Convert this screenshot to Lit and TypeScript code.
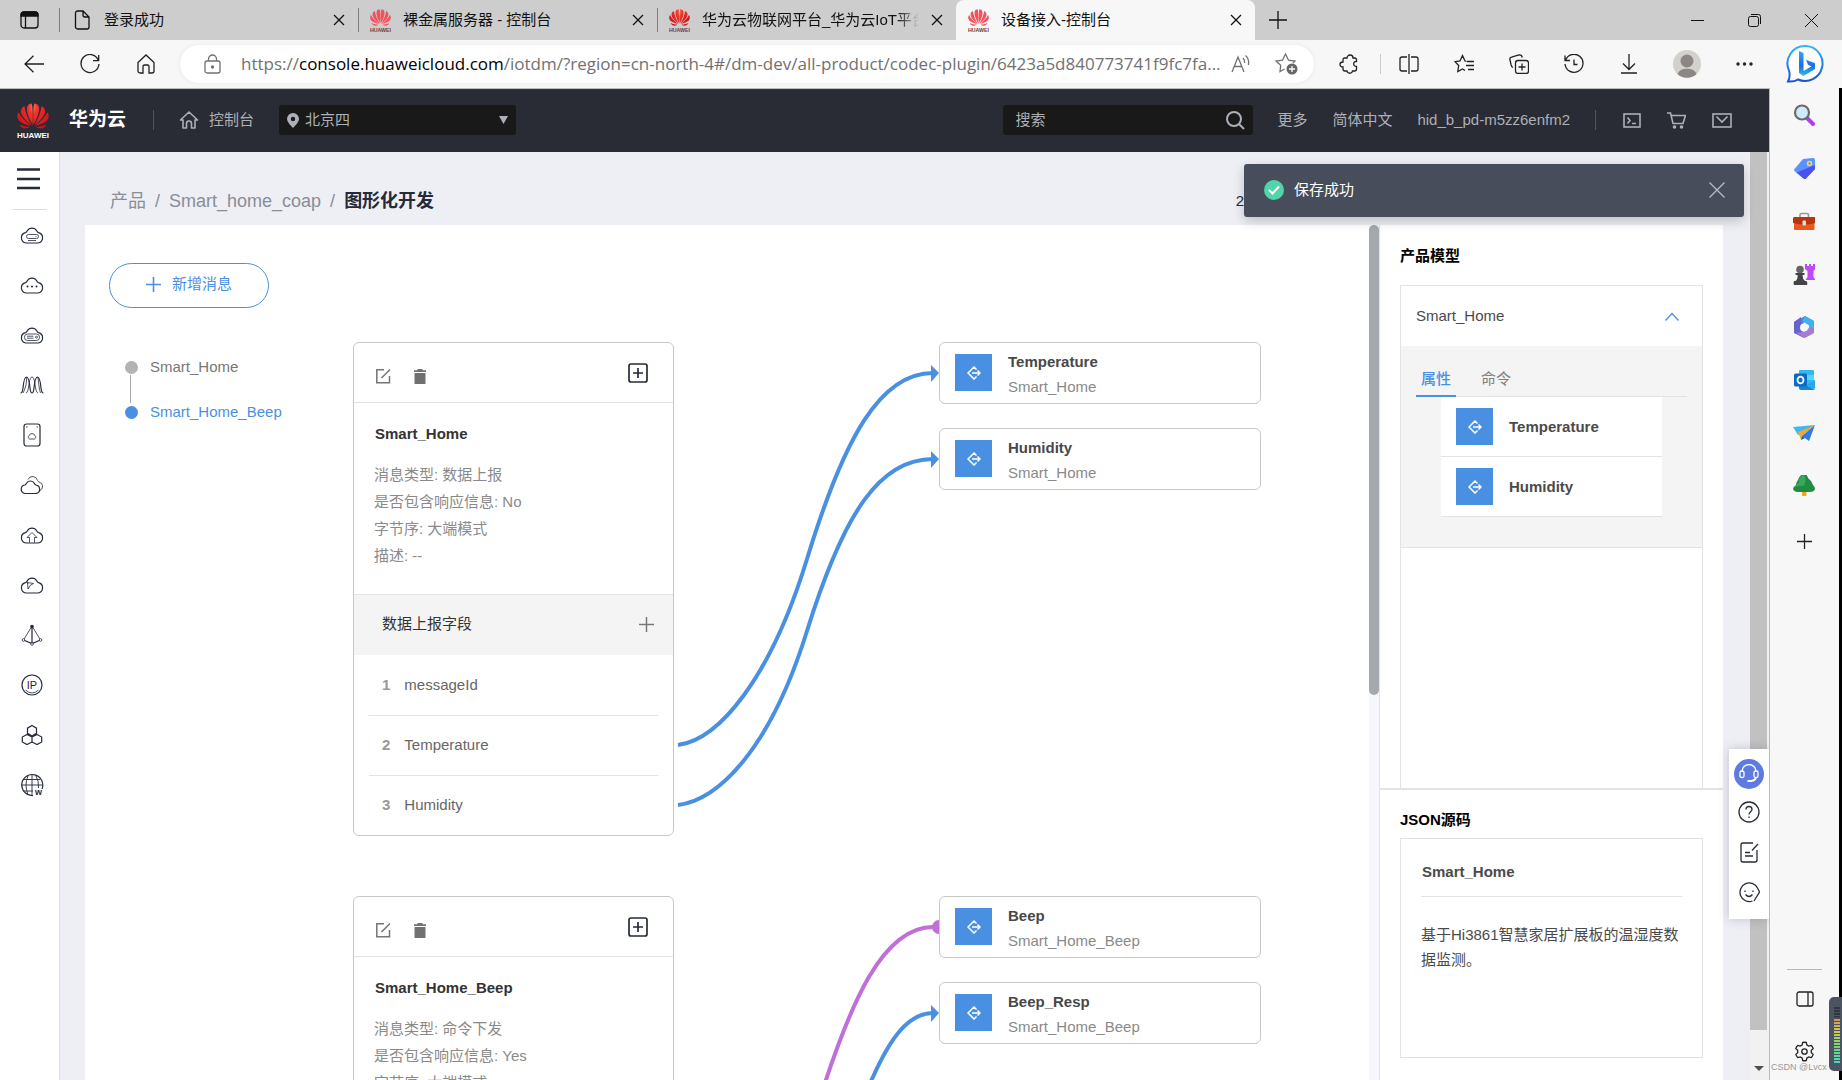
import { LitElement, html, svg, css } from "lit";
import { customElement, property } from "lit/decorators.js";
import { classMap } from "lit/directives/class-map.js";

const base = css`
  * { box-sizing: border-box; }
  button { border: 0; padding: 0; margin: 0; background: none; font: inherit; color: inherit; cursor: pointer; display: flex; align-items: center; justify-content: center; }
  a { color: inherit; text-decoration: none; }
  svg { display: block; flex: none; fill: none; stroke: currentColor; }
  ul, ol { list-style: none; margin: 0; padding: 0; }
  h1, h2, h3, p { margin: 0; font-size: inherit; }
`;

const icon = (body: unknown, w = 20, h = 20, box = `0 0 ${w} ${h}`, sw = 1.3) =>
  html`<svg width=${w} height=${h} viewBox=${box} stroke-width=${sw} aria-hidden="true">${body}</svg>`;

const petals = svg`
  <path d="M15.6 22C11 14 9.3 8 10 4C10.6 1.4 13 .5 14.7 .4C15.8 4 16 14 15.6 22Z"/>
  <path d="M14.7 22.4C8 17 3.3 12 3.9 7.5C4.3 5 6 3.8 7.5 3.2C8 9 11 16 14.7 22.4Z"/>
  <path d="M13.9 22.7C7 21.5 1.3 18.6 .5 15C0 12.5 .5 10.5 1.6 9.2C4 14.5 9 19 13.9 22.7Z"/>
  <path d="M13.2 23.8C9 26.3 4.8 26.2 2.4 21.4C6 23 10 23.6 13.2 23.8Z"/>`;

const huawei = (w: number, h: number, fill: string, text: string) => html`
  <svg width=${w} height=${h} viewBox="0 0 32 35" stroke="none" aria-hidden="true" style="stroke:none">
    <defs><radialGradient id="hw" cx="20" cy="4" r="24" gradientUnits="userSpaceOnUse">
      <stop offset="0" stop-color="#ffb08a"/><stop offset=".35" stop-color="#f0352c"/><stop offset="1" stop-color="#cf1017"/>
    </radialGradient></defs>
    <g fill=${fill}>${petals}<g transform="translate(32) scale(-1 1)">${petals}</g></g>
    <text x="16" y="34.5" text-anchor="middle" font-family="Liberation Sans, sans-serif" font-weight="700" font-size="8" fill=${text}>HUAWEI</text>
  </svg>`;

const closeIcon = svg`<path d="M1 1L11 11M11 1L1 11"/>`;
const cloud = svg`<path d="M6 18A5.3 5.3 0 0 1 5.5 7.6Q6.6 7.3 7.3 5.8A5.4 5.4 0 0 1 16.7 5.8Q17.4 7.3 18.5 7.6A5.3 5.3 0 0 1 18 18Z"/>`;

@customElement("browser-tabs")
class BrowserTabs extends LitElement {
  static styles = [base, css`
    :host { display: flex; height: 40px; background: #cdcdcd; font-size: 15px; color: #111; padding-right: 18px; align-items: stretch; overflow: hidden; }
    .workspace { width: 59px; }
    .tab { display: flex; align-items: center; flex: 0 1 299px; min-width: 0; padding: 0 13px 0 11px; border-left: 1px solid transparent; position: relative; }
    .tab::before { content: ""; position: absolute; left: -1px; top: 8px; height: 24px; width: 1px; background: #7d7d7d; }
    .tab.active { background: #f7f7f7; border-radius: 8px 8px 0 0; }
    .tab.active::before { display: none; }
    .title { flex: 1; min-width: 0; justify-content: flex-start; gap: 12px; text-align: left; }
    .label { flex: 1; white-space: nowrap; overflow: hidden; }
    .fade .label { -webkit-mask-image: linear-gradient(90deg, #000 90%, transparent); mask-image: linear-gradient(90deg, #000 90%, transparent); margin-right: 12px; }
    .add { width: 46px; }
    .space { flex: 1; }
    .win { width: 57px; }
    .win:last-child { width: 56px; margin-right: -15px; }
  `];
  render() {
    const doc = icon(svg`<path d="M1.5 3A2 2 0 0 1 3.5 1H9L15 7V17A2 2 0 0 1 13 19H3.5A2 2 0 0 1 1.5 17ZM9 1V5A2 2 0 0 0 11 7H15"/>`, 21, 20, "-3 0 21 20");
    const tabs = [
      { label: "登录成功", icon: doc },
      { label: "裸金属服务器 - 控制台", icon: huawei(21, 23, "#f4515f", "#6e3a40") },
      { label: "华为云物联网平台_华为云IoT平台", icon: huawei(21, 23, "url(#hw)", "#6e3a40"), fade: true },
      { label: "设备接入-控制台", icon: huawei(21, 23, "#f4515f", "#6e3a40"), active: true },
    ];
    return html`
      <button class="workspace" aria-label="工作区">${icon(svg`<rect x="1" y="1" width="17" height="16" rx="3"/><path d="M1 5V4A3 3 0 0 1 4 1H15A3 3 0 0 1 18 4V5Z" fill="#111"/><path d="M5.5 5V17"/>`, 19, 18)}</button>
      ${tabs.map(t => html`<div class=${classMap({ tab: true, active: !!t.active, fade: !!t.fade })}>
        <button class="title">${t.icon}<span class="label">${t.label}</span></button>
        <button aria-label="关闭标签页">${icon(closeIcon, 12, 12)}</button>
      </div>`)}
      <button class="add" aria-label="新建标签页">${icon(svg`<path d="M9 0V18M0 9H18"/>`, 18, 18)}</button>
      <span class="space"></span>
      <button class="win" aria-label="最小化">${icon(svg`<path d="M0 6.5H13"/>`, 13, 13, "0 0 13 13", 1)}</button>
      <button class="win" aria-label="还原">${icon(svg`<rect x=".5" y="2.5" width="10" height="10" rx="2"/><path d="M3 .5H10.5A2 2 0 0 1 12.500 2.500V10"/>`, 13, 13, "0 0 13 13", 1)}</button>
      <button class="win" aria-label="关闭">${icon(svg`<path d="M0 0L13 13M13 0L0 13"/>`, 13, 13, "0 0 13 13", 1)}</button>`;
  }
}

@customElement("browser-toolbar")
class BrowserToolbar extends LitElement {
  static styles = [base, css`
    :host { display: flex; height: 48px; align-items: center; background: #f7f7f7; color: #222; padding: 0 16px 0 6px; }
    .nav { width: 56px; height: 40px; }
    .address { flex: 1; min-width: 0; height: 38px; margin-left: 6px; border-radius: 19px; background: #fff; box-shadow: 0 0 4px #e6e6e6; display: flex; align-items: center; padding: 0 16px 0 24px; color: #717171; }
    .url { flex: 1; min-width: 0; margin-left: 20px; font: 17px/24px "Open Sans", "Noto Sans", sans-serif; white-space: nowrap; overflow: hidden; }
    .host { color: #000; }
    .read { width: 24px; }
    .read + .read { margin-left: 21px; }
    .tool { width: 55px; height: 40px; }
    .puzzle { width: 66px; padding-left: 4px; }
    .rule { width: 1px; height: 20px; background: #ccc; }
    .tool.me { width: 61px; }
    .more { margin-right: 14px; }
  `];
  render() {
    const tools: [string, unknown][] = [
      ["分屏", icon(svg`<path d="M8 3H3A2 2 0 0 0 1 5V15A2 2 0 0 0 3 17H8M12 3H17A2 2 0 0 1 19 5V15A2 2 0 0 1 17 17H12M10 0V20"/>`)],
      ["收藏夹", icon(svg`<path d="M12.500 7.500L11 7L8.500 1.500L6 7L1 7.700L4.700 11.500L3.800 17.500L8.500 15L11 16.500M13 7.500H20M12 11.500H20M14 15.500H20"/>`)],
      ["集锦", icon(svg`<rect x="6.500" y="6.500" width="13" height="13" rx="2.500"/><path d="M13 9.500V16.500M9.500 13H16.500M4 13.500C2.500 13 2.500 12 2 10.500L1 6C.6 4.500 1 3.500 2.500 3.200L10 1C12 .6 12.800 1.200 13.300 3.500"/>`)],
      ["历史记录", icon(svg`<path d="M1 1.500V6.500H6M1.500 6.300A9 9 0 1 1 1 10M10 5.500V10.500H13.500"/>`)],
      ["下载", icon(svg`<path d="M8 0V15M2 9.500L8 15.500L14 9.500M0 19H16"/>`, 16, 20)],
    ];
    return html`
      <button class="nav" aria-label="后退">${icon(svg`<path d="M20 9H1M9.500 .8L1 9L9.500 17.200"/>`, 20, 18)}</button>
      <button class="nav" aria-label="刷新">${icon(svg`<path d="M18.500 6.500A9 9 0 1 0 19 10M18.700 1V6.700H13"/>`)}</button>
      <button class="nav" aria-label="主页">${icon(svg`<path d="M1 8.500L9 1L17 8.500V17A2 2 0 0 1 15 19H12V12.500A1.500 1.500 0 0 0 10.500 11H7.500A1.500 1.500 0 0 0 6 12.500V19H3A2 2 0 0 1 1 17Z"/>`, 18, 20)}</button>
      <div class="address">
        ${icon(svg`<rect x="1" y="7" width="15" height="12" rx="2"/><path d="M4.500 7V5A4 4 0 0 1 12.500 5V7"/><circle cx="8.500" cy="13" r="1" fill="#666"/>`, 17, 20)}
        <span class="url">https://<span class="host">console.huaweicloud.com</span>/iotdm/?region=cn-north-4#/dm-dev/all-product/codec-plugin/6423a5d840773741f9fc7fa...</span>
        <button class="read" aria-label="大声朗读">${icon(svg`<path d="M1 18L7 3L13 18M3.200 12.500H10.800M12 4Q14 6 13.500 9M14.500 1.500Q18.500 5 17.500 11"/>`, 20, 20)}</button>
        <button class="read" aria-label="收藏此页">${icon(svg`<path d="M9.500 16L5 18.500L5.700 12.300L1 8L7.500 7.200L10.500 1L13.500 7.200L20 8L18 10"/><circle cx="17" cy="16" r="5.500" fill="#666" stroke="none"/><path d="M17 13V19M14 16H20" stroke="#fff"/>`, 23, 22)}</button>
      </div>
      <button class="tool puzzle" aria-label="扩展">${icon(svg`<path d="M5 4H8A3 3 0 0 1 14 4H15.500A2 2 0 0 1 17.500 6V7.500C14 7 13.500 12.500 17.500 12.500V15A2 2 0 0 1 15.500 17H13.500C13 20 8.500 20 8 17H6A2 2 0 0 1 4 15V13C0 13 0 8 4 8V6A2 2 0 0 1 5 4Z"/>`)}</button>
      <span class="rule"></span>
      ${tools.map(([n, i]) => html`<button class="tool" aria-label=${n}>${i}</button>`)}
      <button class="tool me" aria-label="个人资料">${icon(svg`<g stroke="none"><circle cx="14" cy="14" r="14" fill="#d4d1cd"/><circle cx="14" cy="11" r="6.500" fill="#8b8784"/><path d="M4.500 24A9.800 7 0 0 1 23.500 24A14 14 0 0 1 4.500 24Z" fill="#8b8784"/></g>`, 28, 28)}</button>
      <button class="tool more" aria-label="设置及其他">${icon(svg`<g fill="#222" stroke="none"><circle cx="2" cy="2" r="1.700"/><circle cx="8.500" cy="2" r="1.700"/><circle cx="15" cy="2" r="1.700"/></g>`, 17, 4)}</button>
      <button aria-label="必应">${icon(svg`<defs><linearGradient id="bo" x1="0" y1="0" x2="0" y2="1"><stop offset="0" stop-color="#2fb8f5"/><stop offset="1" stop-color="#1c50d0"/></linearGradient><linearGradient id="bb" x1="0" y1="0" x2="0" y2="1"><stop offset="0" stop-color="#35a6f2"/><stop offset=".6" stop-color="#1b6ee0"/><stop offset="1" stop-color="#2bc4ea"/></linearGradient></defs>
        <path d="M20 2A17.500 17.500 0 1 1 12 35.500Q8 38 2 37.500Q4.500 33 3.200 27A17.500 17.500 0 0 1 20 2Z" fill="#fff" stroke="url(#bo)" stroke-width="2"/>
        <path d="M13 7L17.500 9V27L25.500 22.500L22 20.800L20 15.800L29 19.300V25L17.500 32L13 29Z" fill="url(#bb)" stroke="none"/>`, 40, 40)}</button>`;
  }
}

@customElement("edge-sidebar")
class EdgeSidebar extends LitElement {
  static styles = [base, css`
    :host { display: flex; flex-direction: column; align-items: center; width: 73px; background: #f7f7f7; border-left: 1px solid #bbb; border-right: 3px solid #000; color: #222; position: relative; }
    .app { height: 53px; width: 53px; padding-right: 2px; }
    .app svg { stroke: none; }
    .plus { height: 58px; padding-right: 1px; }
    .space { flex: 1; }
    .rule { width: 35px; height: 1px; background: #b8b8b8; }
    .tool { height: 57px; width: 54px; }
    .tool.gear { height: 49px; margin-bottom: 4px; }
    .meter { position: absolute; right: -3px; bottom: 9px; width: 13px; height: 74px; border-radius: 5px 0 0 5px; background: #4d5461; padding: 9px 2px 8px 5px; }
    .bars { display: block; height: 100%; background: repeating-linear-gradient(#4d5461 0 1px, transparent 1px 3px), linear-gradient(#31353e 20%, #c8935a 21%, #cfc75a 45%, #7fcf7c 70%, #46d6c0); }
    .mark { position: absolute; left: 1px; bottom: 6px; font: 9px/14px "Liberation Sans", sans-serif; color: #999; white-space: nowrap; }
  `];
  render() {
    const apps: [string, unknown][] = [
      ["搜索", svg`<path d="M14 14L20 20" stroke="#b53bf0" stroke-width="4" stroke-linecap="round"/><circle cx="9" cy="8.500" r="7" fill="#cfeafc" stroke="#6b6b6b" stroke-width="2.200"/>`],
      ["购物", svg`<path d="M10 2L20 1Q22 1 22 3V12L13 21.500Q12 22.500 10.500 21.500L1.500 14Q.5 13 1.500 12Z" fill="#5b92ff"/><path d="M3.500 15.500L22 8V12L13 21.500Q12 22.500 10.500 21.500Z" fill="#4a52f5"/><circle cx="16.500" cy="6.500" r="2" fill="#5b92ff" stroke="#ffd940" stroke-width="1.500"/>`],
      ["工具", svg`<path d="M7 8V5Q7 3.500 8.500 3.500H14Q15.500 3.500 15.500 5V8" stroke="#999" stroke-width="1.600" fill="none"/><rect x="1" y="13" width="20.500" height="7" rx="1" fill="#e65a22"/><path d="M1 7H21.500Q22.500 7 22.500 8.500V13Q11 16 0 13V8.500Q0 7 1 7Z" fill="#b8340d"/><rect x="9.500" y="10.500" width="3.500" height="5" rx="1" fill="#ddd"/>`],
      ["游戏", svg`<path d="M12 1H14V3H16V1H18V3H20V1H22.500V6L20.500 8V14L22.500 17H12.500L14.500 14V8L12 6Z" fill="#c04bf5"/><circle cx="7" cy="6.500" r="3.800" fill="#666"/><path d="M2.500 10H11.500V12H9.500Q9.500 16 12 18H13.500Q15 20 14 22H1Q0 20 1 18H2.500Q5 16 4.500 12H2.500Z" fill="#444"/>`],
      ["Microsoft 365", svg`<path d="M12 0L21 5V12L16 9L11 6L8 15L1 16V6Z" fill="#4d7ee8"/><path d="M12 0L21 5V13L16 16V9L9 5Z" fill="#3cb3ee"/><path d="M1 6L8 1V14L12 17L11 22L1 17Z" fill="#6763cc"/><path d="M21 12V17L12 22L3 17L10 16L16 12Z" fill="#a679d6"/><circle cx="11" cy="11.500" r="4" fill="#f7f7f7"/>`],
      ["Outlook", svg`<rect x="6" y="1" width="15" height="19" rx="1" fill="#35b8f1"/><path d="M13 6H21V11H13Z" fill="#50d9ff"/><path d="M6 12L22 21H8Q6 21 6 19Z" fill="#1784d9"/><path d="M22 11V20L14 15.500Z" fill="#28a8ea"/><rect x="1" y="4.500" width="13" height="13" rx="1.500" fill="#0a6cc4"/><ellipse cx="7.500" cy="11" rx="3" ry="3.400" stroke="#fff" stroke-width="1.800" fill="none"/>`],
      ["Drop", svg`<path d="M0 5L22 3L5 13Z" fill="#3cb9f3"/><path d="M5 10L22 3L9 14L8 18Z" fill="#f4a52a"/><path d="M9 14L22 3L16 19Z" fill="#2b79ea"/><path d="M8 18L9 14L12 16Z" fill="#1c57b8"/>`],
      ["E-tree", svg`<rect x="9" y="15" width="4.500" height="6" rx="1" fill="#f3a31c"/><path d="M11 -1Q14 -1 15 3L18 6Q19 8 20 10Q22 12 22 14Q21 17 17 17H5Q1 17 0 14Q0 12 3 10Q3 8 5 5Q7 -1 11 -1Z" fill="#1f8b43"/><path d="M11 0Q6 0 6 7Q2 11 1 14Q3 10 11 11Q14 5 11 0Z" fill="#3aa75c"/>`],
    ];
    return html`
      ${apps.map(([n, b]) => html`<button class="app" aria-label=${n}>${icon(b, 22, 22)}</button>`)}
      <button class="plus" aria-label="自定义">${icon(svg`<path d="M7.500 0V15M0 7.500H15"/>`, 15, 15)}</button>
      <span class="space"></span><span class="rule"></span>
      <button class="tool" aria-label="隐藏侧边栏">${icon(svg`<rect x="1" y="1" width="16" height="14" rx="2"/><path d="M12 1V15"/>`, 18, 16)}</button>
      <button class="tool gear" aria-label="设置">${icon(svg`<circle cx="10.500" cy="10.500" r="2.700"/><path d="M8.700 1.500Q10.500 1 12.300 1.500L12.900 4L14.800 5.100L17.300 4.400Q18.600 5.800 19.200 7.600L17.300 9.400V11.600L19.200 13.400Q18.600 15.200 17.300 16.600L14.800 15.900L12.900 17L12.300 19.500Q10.500 20 8.700 19.500L8.100 17L6.200 15.900L3.700 16.600Q2.400 15.200 1.800 13.400L3.700 11.600V9.400L1.800 7.600Q2.400 5.800 3.700 4.400L6.200 5.100L8.100 4Z"/>`, 21, 21)}</button>
      <span class="mark">CSDN @Lvcx</span>
      <span class="meter"><span class="bars"></span></span>`;
  }
}

@customElement("console-header")
class ConsoleHeader extends LitElement {
  static styles = [base, css`
    :host { display: flex; align-items: center; height: 63px; background: #292b35; color: #adb0b8; font-size: 15px; padding: 0 37px 2px 17px; border-top: 1px solid #33353f; }
    .brand { display: flex; align-items: center; gap: 20px; color: #fff; font-weight: 700; font-size: 19px; }
    .rule { width: 1px; height: 20px; background: #50525c; }
    .home { display: flex; align-items: center; gap: 10px; margin: 0 25px; }
    .brand + .rule { margin-left: 27px; }
    .region { width: 237px; height: 30px; background: #191919; border-radius: 3px; display: flex; align-items: center; padding: 0 8px; }
    select { flex: 1; appearance: none; border: 0; background: transparent; color: inherit; font: inherit; height: 30px; padding: 0 0 0 6px; }
    .search { width: 250px; height: 30px; background: #191919; border-radius: 3px; display: flex; align-items: center; padding: 0 8px 0 12px; margin-left: auto; }
    input { flex: 1; min-width: 0; border: 0; background: transparent; font: inherit; color: inherit; padding: 0; }
    input::placeholder { color: #adb0b8; }
    .links { display: flex; align-items: center; gap: 25px; margin-left: 24px; }
    .tools { display: flex; align-items: center; gap: 26px; margin-left: 2px; }
  `];
  render() {
    return html`
      <a class="brand" href="#">${huawei(32, 35, "url(#hw)", "#fff")}华为云</a>
      <span class="rule"></span>
      <a class="home" href="#">${icon(svg`<path d="M1.500 10L10 2L18.500 10H16V18H12.500V13.500A2.500 2.500 0 0 0 7.500 13.500V18H4V10Z" stroke-linejoin="round"/>`, 20, 20, "0 0 20 20", 1.6)}控制台</a>
      <label class="region">${icon(svg`<path d="M6 0A6 6 0 0 1 12 6Q12 9 6 15Q0 9 0 6A6 6 0 0 1 6 0ZM6 3.800A2.200 2.200 0 1 0 6 8.200A2.200 2.200 0 1 0 6 3.800Z" fill="#adb0b8" stroke="none"/>`, 12, 15)}
        <select aria-label="区域"><option>北京四</option></select>
        ${icon(svg`<path d="M0 0H9L4.500 8Z" fill="#adb0b8" stroke="none"/>`, 9, 8)}</label>
      <label class="search"><input placeholder="搜索" aria-label="搜索">${icon(svg`<circle cx="8" cy="8" r="7"/><path d="M13 13L18 18"/>`, 19, 19, "0 0 19 19", 2)}</label>
      <nav class="links"><a href="#">更多</a><a href="#">简体中文</a><a href="#">hid_b_pd-m5zz6enfm2</a><span class="rule"></span>
        <span class="tools">
          <a href="#" aria-label="CloudShell">${icon(svg`<rect x="1" y="1" width="16" height="13"/><path d="M4.500 4.500L7 7.500L4.500 10.500M9 10.500H13"/>`, 18, 15, "0 0 18 15", 1.6)}</a>
          <a href="#" aria-label="购物车">${icon(svg`<path d="M0 1H3.500L6 11.500H16L18.500 3.500H4.500"/><circle cx="7.500" cy="15" r="1" fill="#adb0b8"/><circle cx="14.500" cy="15" r="1" fill="#adb0b8"/>`, 19, 17, "0 0 19 17", 1.6)}</a>
          <a href="#" aria-label="消息">${icon(svg`<rect x="1" y="1" width="18" height="13"/><path d="M4.500 3.500L10 9L15.500 3.500"/>`, 20, 15, "0 0 20 15", 1.6)}</a>
        </span></nav>`;
  }
}

@customElement("service-nav")
class ServiceNav extends LitElement {
  static styles = [base, css`
    :host { display: flex; flex-direction: column; width: 60px; background: #fff; border-right: 1px solid #dcdde3; color: #252b3a; padding: 16px 0 0; overflow: hidden; }
    .menu { margin-left: 17px; align-self: flex-start; }
    .rule { height: 1px; margin: 19px 12px 0 13px; background: #dcdcdc; }
    .item { height: 50px; display: flex; align-items: center; padding-left: 20px; }
    text { font-family: "Liberation Sans", sans-serif; fill: #252b3a; stroke: none; }
  `];
  render() {
    const thin = (b: unknown) => svg`<g stroke-width=".8">${b}</g>`;
    const items: [string, unknown][] = [
      ["弹性云服务器", svg`${cloud}${thin(svg`<rect x="6.500" y="9.500" width="12" height="4" rx="2"/><path d="M8 15.500H16M15.500 11.500H16.500"/>`)}`],
      ["云容器引擎", svg`${cloud}<g fill="#252b3a" stroke="none"><circle cx="7.500" cy="11.500" r="1"/><circle cx="12" cy="11.500" r="1"/><circle cx="16.500" cy="11.500" r="1"/></g>`],
      ["裸金属服务器", svg`${cloud}${thin(svg`<rect x="4.500" y="9" width="15" height="6.500" rx="3"/><path d="M7 11.200H13.500M7 13.200H13.500"/><circle cx="16.500" cy="12.200" r="1"/>`)}`],
      ["弹性伸缩", svg`<path d="M.500 18Q2.500 18 3 13Q4 2 6.500 2Q9 2 10 13Q10.500 18 12 18Q13.500 18 14 13Q15 2 17.500 2Q20 2 21 13Q21.500 18 23.500 18"/><path stroke-width=".8" d="M3 18Q4 17 6 10Q7 2 6.500 2M6 18Q8 18 9 9Q10 2 12 2Q14 2 15 9Q16 18 18 18M20.500 18Q19 14 18 2"/>`],
      ["云硬盘", svg`<rect x="4" y="-1" width="16" height="22" rx="2.500"/>${thin(svg`<path d="M9.500 14H14.500A2 2 0 0 0 14.800 10.500A3 3 0 0 0 9.200 10.500A2 2 0 0 0 9.500 14ZM6 2H7.500M16.500 2H18"/>`)}`],
      ["专属主机", svg`<path d="M5 18.500A4.300 4.300 0 0 1 4.800 10Q5.700 9.700 6.300 8.500A4.600 4.600 0 0 1 14.500 8.500Q15 9.700 16 10A4.300 4.300 0 0 1 16 18.500Z"/>${thin(svg`<path d="M8 4.500A5 5 0 0 1 17.500 5.500Q18 6.500 19 7A4.500 4.500 0 0 1 20 15.500"/>`)}`],
      ["对象存储", svg`${cloud}${thin(svg`<path d="M12 7.500L17 12.500H14.500V17.500M12 7.500L7 12.500H9.500V17.500"/>`)}`],
      ["内容分发", svg`${cloud}${thin(svg`<path d="M7 6.500Q7.500 8 8 9M7.500 7.500L13.500 8.500L10 10.500L8 14Z"/>`)}`],
      ["虚拟私有云", svg`${thin(svg`<path d="M12 1L3.500 15M12 1L20.500 15"/>`)}<path d="M12 1V18.500M3.500 15L12 18.500L20.500 15"/><circle cx="12" cy="1.500" r="1.200" fill="#252b3a"/><g stroke-width=".8" fill="#fff"><circle cx="3.500" cy="15" r="1.300"/><circle cx="20.500" cy="15" r="1.300"/><circle cx="12" cy="19" r="1.300"/></g>`],
      ["弹性公网IP", svg`<circle cx="12" cy="10" r="10"/><path d="M5.500 15Q12 21 18.500 15" stroke-width=".8"/><text x="12" y="14" text-anchor="middle" font-size="11">IP</text>`],
      ["区块链", svg`<path d="M12 .5L16.500 3.200V8.300L12 11L7.500 8.300V3.200ZM7 9.500L12 12V17L7 19.500L2.300 17V12ZM17 9.500L21.700 12V17L17 19.500L12 17V12Z"/>`],
      ["WeLink", svg`<path d="M22 14A10.500 10.500 0 1 0 13 20.500"/><path stroke-width=".9" d="M12 0V20M1.500 10H22.500M4 4.500H20M4 16H13M8 1Q4 10 8 19.500M16 1Q19 6 18.500 13"/><text x="15" y="20" font-size="9" font-weight="700">w</text>`],
    ];
    return html`
      <button class="menu" aria-label="服务列表">${icon(svg`<path d="M0 1.500H23M0 11H23M0 20H23"/>`, 23, 22, "0 0 23 22", 2.4)}</button>
      <div class="rule"></div>
      ${items.map(([n, b]) => html`<a class="item" href="#" aria-label=${n}>${icon(b, 24, 24, "0 -2 24 24", 1.2)}</a>`)}`;
  }
}

const linkGlyph = html`<svg width="14" height="14" viewBox="0 0 14 14" stroke-width="1.5" aria-hidden="true"><path d="M9.500 3.500L7 1L1 7L7 13L9.500 10.500M5 7H13M10.500 4.500L13 7L10.500 9.500"/></svg>`;

@customElement("message-card")
class MessageCard extends LitElement {
  @property() name = "";
  @property({ attribute: false }) info: string[] = [];
  @property() section = "";
  @property({ attribute: false }) fields: string[] = [];
  static styles = [base, css`
    :host { display: block; width: 321px; border: 1px solid #c8c8c8; border-radius: 6px; background: #fff; color: #8a8a8a; overflow: hidden; }
    .head { height: 60px; border-bottom: 1px solid #e3e3e3; display: flex; align-items: center; padding: 8px 25px 0 22px; gap: 23px; color: #757575; }
    .expand { margin: 0 0 8px auto; color: #252b3a; }
    .body { padding: 19px 20px 25px; }
    h2 { font-size: 15px; line-height: 24px; color: #333; padding-left: 1px; margin-bottom: 15px; }
    p { line-height: 27px; }
    .section { height: 61px; border-top: 1px solid #e3e3e3; background: #f4f4f4; display: flex; align-items: center; justify-content: space-between; padding: 0 19px 2px 28px; color: #333; }
    .section button { color: #777; }
    ol { padding: 1px 15px 0; }
    li { height: 60px; border-bottom: 1px solid #e3e3e3; display: flex; align-items: center; padding: 0 0 2px 13px; color: #666; gap: 14px; }
    li:last-child { border: 0; height: 59px; }
    b { color: #999; }
  `];
  render() {
    return html`
      <div class="head">
        <button aria-label="编辑">${icon(svg`<path d="M8 .8H.8V13.800H13.500V7M14 .5L5.500 9"/>`, 15, 15, "0 0 15 15", 1.5)}</button>
        <button aria-label="删除">${icon(svg`<path d="M.500 4H11.500V15H.500ZM0 1.200H3.500V0H8.500V1.200H12V3H0Z" fill="#707070" stroke="none"/>`, 12, 15)}</button>
        <button class="expand" aria-label="展开">${icon(svg`<rect x="1" y="1" width="18" height="18" rx="2"/><path d="M10 5V15M5 10H15"/>`, 20, 20, "0 0 20 20", 1.7)}</button>
      </div>
      <div class="body"><h2>${this.name}</h2>${this.info.map(l => html`<p>${l}</p>`)}</div>
      <div class="section"><span>${this.section}</span><button aria-label="添加字段">${icon(svg`<path d="M7.500 0V15M0 7.500H15"/>`, 15, 15, "0 0 15 15", 1.5)}</button></div>
      <ol>${this.fields.map((f, i) => html`<li><b>${i + 1}</b><span>${f}</span></li>`)}</ol>`;
  }
}

@customElement("property-node")
class PropertyNode extends LitElement {
  @property() name = "";
  @property() service = "";
  static styles = [base, css`
    :host { display: flex; align-items: center; gap: 16px; width: 322px; height: 62px; border: 1px solid #c8c8c8; border-radius: 6px; background: #fff; padding: 0 15px; line-height: 25px; color: #8a8a8a; }
    .tile { width: 37px; height: 37px; margin-bottom: 1px; background: #4a90e2; color: #fff; display: grid; place-items: center; }
    .text { padding-top: 1px; }
    h3 { color: #484848; font-size: 15px; }
  `];
  render() {
    return html`<span class="tile">${linkGlyph}</span><div class="text"><h3>${this.name}</h3><p>${this.service}</p></div>`;
  }
}

@customElement("message-canvas")
class MessageCanvas extends LitElement {
  static styles = [base, css`
    :host { display: block; position: relative; flex: 1; min-width: 0; background: #fff; overflow: hidden; }
    .add { height: 45px; width: 160px; margin: 38px 0 0 24px; border: 1px solid #4a90e2; border-radius: 23px; color: #4a90e2; gap: 11px; padding-bottom: 3px; }
    .steps { margin: 48px 0 0 40px; color: #777; line-height: 22px; display: flex; flex-direction: column; gap: 23px; }
    .steps li { display: flex; align-items: center; gap: 12px; position: relative; }
    .steps li::before { content: ""; width: 13px; height: 13px; border-radius: 50%; background: #b3b3b3; }
    .steps li.on { color: #4a90e2; }
    .steps li.on::before { background: #4a90e2; }
    .steps li.on::after { content: ""; position: absolute; left: 5px; bottom: 20px; width: 1px; height: 28px; background: #aaa; }
    .wires { position: absolute; left: 0; top: 0; stroke-width: 4; }
    message-card, property-node { position: absolute; }
    .track { position: absolute; right: 0; top: 0; bottom: 0; width: 10px; background: #f6f7fc; }
    .thumb { height: 470px; max-height: 55%; border-radius: 5px; background: #a5a8ac; }
  `];
  render() {
    const cards = [
      { x: 268, y: 117, name: "Smart_Home", section: "数据上报字段", info: ["消息类型: 数据上报", "是否包含响应信息: No", "字节序: 大端模式", "描述: --"], fields: ["messageId", "Temperature", "Humidity"] },
      { x: 268, y: 671, name: "Smart_Home_Beep", section: "命令下发字段", info: ["消息类型: 命令下发", "是否包含响应信息: Yes", "字节序: 大端模式", "描述: --"], fields: ["messageId"] },
    ];
    const nodes = [
      { x: 854, y: 117, name: "Temperature", service: "Smart_Home" },
      { x: 854, y: 203, name: "Humidity", service: "Smart_Home" },
      { x: 854, y: 671, name: "Beep", service: "Smart_Home_Beep" },
      { x: 854, y: 757, name: "Beep_Resp", service: "Smart_Home_Beep" },
    ];
    return html`
      <button class="add">${icon(svg`<path d="M7.500 0V15M0 7.500H15"/>`, 15, 15, "0 0 15 15", 1.6)}新增消息</button>
      <ol class="steps"><li>Smart_Home</li><li class="on">Smart_Home_Beep</li></ol>
      <svg class="wires" width="860" height="900" viewBox="0 0 860 900" aria-hidden="true">
        <g stroke="#4a90e2">
          <path d="M593 520C633 515 685 455 722 334S795 148 848 148"/>
          <path d="M593 580C633 575 685 525 722 406S795 234 848 234"/>
          <path d="M776 880C798 825 818 788 848 788"/>
        </g>
        <path stroke="#c06fd8" d="M736 870C765 780 797 702 848 702"/>
        <g fill="#4a90e2" stroke="none"><path d="M846 140L854 148L846 157Z"/><path d="M846 226L854 234L846 243Z"/><path d="M846 780L854 788L846 797Z"/></g>
        <circle cx="854" cy="702" r="7" fill="#c06fd8" stroke="none"/>
      </svg>
      ${cards.map(c => html`<message-card style="left:${c.x}px;top:${c.y}px" .name=${c.name} .section=${c.section} .info=${c.info} .fields=${c.fields}></message-card>`)}
      ${nodes.map(n => html`<property-node style="left:${n.x}px;top:${n.y}px" .name=${n.name} .service=${n.service}></property-node>`)}
      <div class="track"><div class="thumb"></div></div>`;
  }
}

@customElement("model-panel")
class ModelPanel extends LitElement {
  static styles = [base, css`
    :host { display: flex; flex-direction: column; width: 344px; background: #fff; border-left: 1px solid #e3e3e3; color: #4a4a4a; }
    .model { flex: 1; min-height: 0; display: flex; flex-direction: column; padding: 20px 20px 0; border-bottom: 2px solid #e3e3e3; }
    h2 { font-size: 15px; line-height: 22px; color: #000; }
    .tree { flex: 1; min-height: 0; overflow: hidden; margin-top: 18px; border: 1px solid #e3e3e3; border-bottom: 0; }
    .service { display: flex; width: 100%; height: 60px; justify-content: space-between; padding: 0 23px 0 15px; }
    .service svg { color: #4a90e2; }
    .props { background: #f4f4f4; border-bottom: 1px solid #e3e3e3; padding: 15px 15px 30px; }
    .tabs { display: flex; height: 36px; border-bottom: 1px solid #e3e3e3; gap: 20px; }
    .tabs button { width: 40px; height: 36px; color: #808080; border-bottom: 2px solid transparent; padding-top: 1px; }
    .tabs .on { color: #4a90e2; border-color: #4a90e2; font-weight: 500; }
    .props ul { margin: 0 25px; background: #fff; }
    .props li { height: 60px; border-bottom: 1px solid #e3e3e3; display: flex; align-items: center; gap: 16px; padding-left: 15px; font-weight: 700; }
    .tile { width: 37px; height: 37px; background: #4a90e2; color: #fff; display: grid; place-items: center; }
    .json { padding: 19px 20px 22px; }
    .source { min-height: 220px; margin-top: 7px; border: 1px solid #e3e3e3; padding: 20px 20px; }
    h3 { font-size: 15px; line-height: 26px; padding: 0 1px 11px; border-bottom: 1px solid #e3e3e3; margin-bottom: 25px; }
    .source p { line-height: 25px; }
  `];
  render() {
    return html`
      <section class="model"><h2>产品模型</h2>
        <div class="tree">
          <button class="service"><span>Smart_Home</span>${icon(svg`<path d="M.500 9.500L7 2.500L13.500 9.500"/>`, 14, 10)}</button>
          <div class="props">
            <div class="tabs"><button class="on">属性</button><button>命令</button></div>
            <ul>${["Temperature", "Humidity"].map(p => html`<li><span class="tile">${linkGlyph}</span>${p}</li>`)}</ul>
          </div>
        </div>
      </section>
      <section class="json"><h2>JSON源码</h2>
        <div class="source"><h3>Smart_Home</h3><p>基于Hi3861智慧家居扩展板的温湿度数据监测。</p></div>
      </section>`;
  }
}

@customElement("app-root")
class AppRoot extends LitElement {
  static styles = [base, css`
    :host { display: flex; flex-direction: column; height: 100vh; overflow: hidden; background: #f7f7f7; font: 15px/22px "Liberation Sans", "Noto Sans CJK SC", sans-serif; }
    .window { flex: 1; min-height: 0; display: flex; }
    .page { flex: 1; min-width: 0; display: flex; flex-direction: column; position: relative; border-top: 1px solid #bbb; }
    .console { flex: 1; min-height: 0; display: flex; background: #eeeff5; }
    main { flex: 1; min-width: 0; display: flex; flex-direction: column; padding: 0 27px 0 25px; }
    .top { height: 73px; display: flex; align-items: center; justify-content: space-between; padding: 24px 479px 0 25px; }
    .crumbs { display: flex; gap: 9px; font-size: 18px; color: #8a8d96; white-space: nowrap; }
    .crumbs b { color: #252b3a; }
    .step { color: #252b3a; }
    .work { flex: 1; min-height: 0; display: flex; }
    .scroll { width: 19px; background: #f1f1f1; display: flex; flex-direction: column; align-items: center; justify-content: space-between; padding: 0 2px 8px 0; }
    .thumb { width: 17px; height: 878px; max-height: 96%; background: #c1c1c1; }
    .toast { position: absolute; top: 75px; right: 25px; width: 500px; height: 53px; border-radius: 3px; background: #474d5b; color: #fff; display: flex; align-items: center; gap: 10px; padding: 0 19px 2px 20px; box-shadow: 0 4px 12px #0003; }
    .toast button { margin-left: auto; color: #b9bcc4; }
    .help { position: absolute; right: 0; bottom: 161px; width: 40px; height: 170px; background: #fff; box-shadow: 0 0 10px #5050784d; color: #252b3a; display: flex; flex-direction: column; align-items: center; padding-top: 10px; gap: 14px; }
    .help button { height: 26px; }
    .help .agent { height: 30px; width: 30px; border-radius: 50%; background: #5e7ce0; color: #fff; margin-bottom: -4px; }
  `];
  render() {
    return html`
      <browser-tabs></browser-tabs>
      <browser-toolbar></browser-toolbar>
      <div class="window">
        <div class="page">
          <console-header></console-header>
          <div class="console">
            <service-nav></service-nav>
            <main>
              <div class="top">
                <nav class="crumbs"><a href="#">产品</a><span>/</span><a href="#">Smart_home_coap</a><span>/</span><b>图形化开发</b></nav>
                <span class="step">2</span>
              </div>
              <div class="work"><message-canvas></message-canvas><model-panel></model-panel></div>
            </main>
            <div class="scroll"><div class="thumb"></div>${icon(svg`<path d="M0 0H10L5 5Z" fill="#505050" stroke="none"/>`, 10, 6)}</div>
          </div>
          <div class="toast" role="status">
            ${icon(svg`<circle cx="10" cy="10" r="10" fill="#50d4ab" stroke="none"/><path d="M5 10L8.500 13.500L15 6.500" stroke="#fff" stroke-width="2"/>`)}
            <span>保存成功</span><button aria-label="关闭">${icon(svg`<path d="M.5 .5L15.500 15.500M15.500 .5L.5 15.500"/>`, 16, 16)}</button>
          </div>
          <div class="help">
            <button class="agent" aria-label="智能客服">${icon(svg`<path d="M3 8V7.500A7 7 0 0 1 17 7.500V8"/><rect x="1" y="7" width="4" height="6.500" rx="1.500"/><rect x="15" y="7" width="4" height="6.500" rx="1.500"/><path d="M17 13.500Q16 16.800 12.500 17M8.500 17H12.500" stroke-width="1.800"/>`)}</button>
            <button aria-label="帮助">${icon(svg`<circle cx="11" cy="11" r="10"/><path d="M8 8.500Q8 5.500 11 5.500T14 8.500C14 10.500 11 11 11 13.500M11 15.500V17"/>`, 22, 22)}</button>
            <button aria-label="建议">${icon(svg`<path d="M13 1H3A2 2 0 0 0 1 3V18A2 2 0 0 0 3 20H15A2 2 0 0 0 17 18V8M18 2L12 8.500M5 10.500H10M5 14H13"/>`, 19, 21)}</button>
            <button aria-label="评价">${icon(svg`<path d="M18.800 6.500A9.300 9.300 0 1 0 13.500 19M18.500 6L20.500 10L15 19"/><path d="M6.500 12.500Q10 16.500 13.500 12.500M6 8.500V10M14 8.500V10"/>`, 21, 21)}</button>
          </div>
        </div>
        <edge-sidebar></edge-sidebar>
      </div>`;
  }
}
